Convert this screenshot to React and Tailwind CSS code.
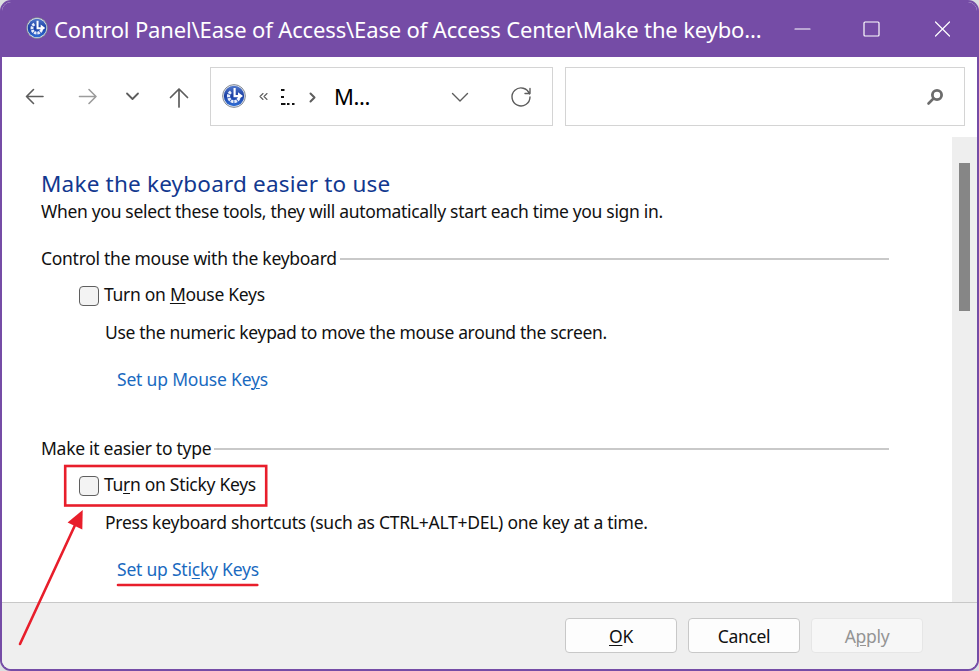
function EaseIcon({ className }) {
  return (
    <svg viewBox="0 0 24 24" className={className}>
      <defs>
        <linearGradient id="disc" x1="0" y1="0" x2="0" y2="1">
          <stop offset="0" stopColor="#5078cc" />
          <stop offset="0.5" stopColor="#1b3fa4" />
          <stop offset="1" stopColor="#2f6fd6" />
        </linearGradient>
      </defs>
      <circle cx="12" cy="12" r="11.4" fill="#e4e8ee" stroke="#6b7280" strokeWidth="0.8" />
      <circle cx="12" cy="12" r="10.2" fill="url(#disc)" />
      <path d="M17 14A5.400 5.400 0 1 1 9.500 7.400" fill="none" stroke="#e8eefb" strokeWidth="3.200" strokeDasharray="2.700 0.800" />
      <path d="M12.600 4v8.200H17" fill="none" stroke="#fff" strokeWidth="2.200" />
      <path d="M16 8.200l5 3.800-5 3.800z" fill="#fff" />
    </svg>
  );
}

function Stroke({ d, className, width = 1.6 }) {
  return (
    <svg viewBox="0 0 24 24" className={className} fill="none" stroke="currentColor" strokeWidth={width} strokeLinecap="round" strokeLinejoin="round">
      <path d={d} />
    </svg>
  );
}

function Key({ children }) {
  return <span className="underline decoration-1 underline-offset-2">{children}</span>;
}

function Section({ title }) {
  return (
    <div className="flex h-6 w-[848px] items-center gap-[3px]">
      <h2 className="tracking-[-0.28px]">{title}</h2>
      <div className="mt-[2px] h-[2px] flex-1 bg-[#c9c9c9]" />
    </div>
  );
}

function Box() {
  return <span className="mt-1 h-5 w-5 rounded-[4px] border border-[#5f5f5f] bg-[#f3f3f3]" />;
}

export default function App() {
  return (
    <div className="relative h-[671px] w-[979px] overflow-hidden bg-[#dcdfe0] font-['Noto_Sans','Open_Sans',sans-serif] text-[17.5px] leading-6 text-[#111]">
      <div className="flex h-full flex-col overflow-hidden rounded-[11px] border-2 border-[#754ca6] bg-white">
        <header className="flex h-[55px] shrink-0 items-center bg-[#754ca6] pl-6 text-white">
          <EaseIcon className="-mt-1 h-[22px] w-[22px]" />
          <h1 className="-mt-[2px] ml-[6px] w-[736px] whitespace-nowrap text-[22px] tracking-[-0.145px]">
            Control Panel\Ease of Access\Ease of Access Center\Make the keybo...
          </h1>
          <Stroke d="M5 12H20" width={1.2} className="-mt-[2px] h-6 w-6 shrink-0" />
          <Stroke d="M6 5h13a1 1 0 0 1 1 1v12a1 1 0 0 1-1 1h-13a1 1 0 0 1-1-1v-12a1 1 0 0 1 1-1z" width={1.2} className="-mt-[2px] ml-[45px] h-6 w-6 shrink-0" />
          <Stroke d="M5.500 5l14 14M19.500 5L5.500 19" width={1.2} className="-mt-[2px] ml-[47px] h-6 w-6 shrink-0" />
        </header>

        <nav className="flex h-20 shrink-0 items-start pl-5 pt-[10px] text-[#5d5d5d]">
          <div className="flex h-[59px] w-[188px] items-center">
            <Stroke d="M21 11.500H4.500M11.500 4.500L4.500 11.500l7 7" className="h-6 w-6" />
            <Stroke d="M3.500 11.500H20M13 4.500L20 11.500l-7 7" className="ml-[30px] h-6 w-6 text-[#9c9c9c]" />
            <Stroke d="M7 8.500l5.500 5.500 5.500-5.500" width={1.8} className="ml-5 h-6 w-6" />
            <Stroke d="M12 22V4M3.500 12.500L12 4l8.500 8.500" width={1.7} className="ml-[23px] h-6 w-6" />
          </div>
          <div className="flex h-[59px] w-[343px] items-center border border-[#d4d4d4]">
            <EaseIcon className="-mt-[2px] ml-[11px] h-6 w-6" />
            <Stroke d="M11 8.500L8 11.500l3 3M15 8.500L12 11.500l3 3" width={1.1} className="ml-[6px] h-6 w-6 shrink-0" />
            <svg viewBox="0 0 16 24" className="ml-1 h-6 w-4 shrink-0" fill="#111">
              <path d="M1 4h3.500v2H1zM1 11h3v2H1zM1 18h4.500v2H1zM7 18h2.500v2H7zM12 18h2.500v2H12z" />
            </svg>
            <Stroke d="M10.500 8.500l4 4-4 4" width={2} className="ml-1 h-6 w-6 shrink-0" />
            <span className="-mt-[2px] ml-[10px] w-10 shrink-0 text-[22px] tracking-[-0.4px] text-black">M...</span>
            <Stroke d="M4.500 8.500L12 16l7.500-7.500" width={1.4} className="ml-[74px] h-6 w-6 shrink-0" />
            <Stroke d="M20.500 9A9 9 0 1 0 21 12M21 3.500v5h-5" width={1.4} className="ml-[37px] h-6 w-6 shrink-0" />
          </div>
          <div className="ml-3 flex h-[59px] w-[400px] items-center justify-end border border-[#d4d4d4] pr-[18px]">
            <svg viewBox="0 0 24 24" className="h-6 w-6" fill="none" stroke="#6c6c6c" strokeLinecap="round">
              <circle cx="15" cy="10" r="4.600" strokeWidth="2.800" />
              <path d="M11.500 13.500L6.500 18.500" strokeWidth="2.600" />
            </svg>
          </div>
        </nav>

        <div className="flex h-[465px] shrink-0">
          <main className="flex w-[950px] flex-col pl-[39px] pt-[33px] whitespace-nowrap">
            <h2 className="h-7 text-[22.5px] leading-7 tracking-[0.2px] text-[#12388f]">Make the keyboard easier to use</h2>
            <p className="mt-px h-6 tracking-[-0.315px]">When you select these tools, they will automatically start each time you sign in.</p>
            <div className="h-[23px]" />
            <Section title="Control the mouse with the keyboard" />
            <div className="mt-3 ml-[38px] flex h-6 gap-[5px] tracking-[-0.29px]">
              <Box />
              <span>Turn on <Key>M</Key>ouse Keys</span>
            </div>
            <p className="mt-[14px] ml-16 h-6 tracking-[-0.335px]">Use the numeric keypad to move the mouse around the screen.</p>
            <a className="mt-[23px] ml-[76px] h-6 tracking-[-0.19px] text-[#1a6abf]">Set up Mouse Ke<Key>y</Key>s</a>
            <div className="h-[45px]" />
            <Section title="Make it easier to type" />
            <div className="mt-3 ml-[38px] flex h-6 gap-[5px] tracking-[-0.3px]">
              <Box />
              <span>Tu<Key>r</Key>n on Sticky Keys</span>
            </div>
            <p className="mt-[14px] ml-16 h-6 tracking-[-0.255px]">Press keyboard shortcuts (such as CTRL+ALT+DEL) one key at a time.</p>
            <a className="mt-[23px] ml-[76px] h-6 tracking-[-0.22px] text-[#1a6abf]">Set up Sti<Key>c</Key>ky Keys</a>
          </main>
          <div className="flex-1 bg-[#eeeeee] pl-[7px] pt-[26px]">
            <div className="h-[148px] w-[11px] bg-[#868686]" />
          </div>
        </div>

        <footer className="flex flex-1 items-start gap-[11px] border-t border-[#c8c8c8] bg-[#efefef] pl-[563px] pt-[15px] tracking-[-0.3px]">
          <button className="h-[35px] w-[112px] rounded-[4px] border border-[#c8c8c8] bg-[#fdfdfd] pt-px"><Key>O</Key>K</button>
          <button className="h-[35px] w-[112px] rounded-[4px] border border-[#c8c8c8] bg-[#fdfdfd] pt-px">Cancel</button>
          <button className="h-[35px] w-[112px] rounded-[4px] border border-[#e6e6e6] bg-[#f7f7f7] pt-px text-[#949494]">A<Key>p</Key>ply</button>
        </footer>
      </div>

      <svg viewBox="0 0 979 671" className="pointer-events-none absolute inset-0 h-full w-full" fill="none" stroke="#e81e2b">
        <rect x="65.200" y="466" width="201" height="39.500" strokeWidth="2.600" />
        <path d="M20 644L76 523" strokeWidth="2.600" strokeLinecap="round" />
        <path d="M82.700 510L67.600 522.500L82.300 529.500z" fill="#e81e2b" stroke="none" />
        <path d="M118 585H257.300" strokeWidth="2.600" strokeLinecap="round" />
      </svg>
    </div>
  );
}
